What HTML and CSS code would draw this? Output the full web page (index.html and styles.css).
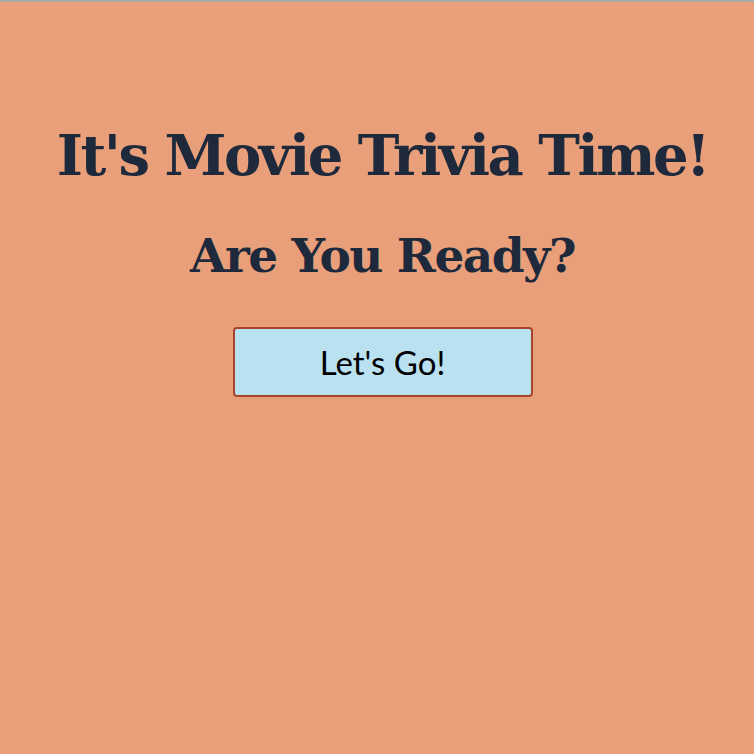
FILE: index.html
```html
<!DOCTYPE html>
<html>
<head>
<meta charset="utf-8">
<link rel="stylesheet" href="styles.css">
</head>
<body>
<main class="intro">
  <h1 class="title">It's Movie Trivia Time!</h1>
  <h2 class="subtitle">Are You Ready?</h2>
  <button class="start">Let's Go!</button>
</main>
</body>
</html>
```
FILE: styles.css
```css
html, body {
  margin: 0;
  padding: 0;
  height: 100%;
}
body {
  background: #e9a07a;
  border-top: 2px solid #a9a9a9;
  box-sizing: border-box;
}
.intro {
  display: flex;
  flex-direction: column;
  align-items: center;
  padding-top: 115px;
  padding-left: 11px;
}
.title {
  margin: 0;
  font-family: "DejaVu Serif", serif;
  font-weight: bold;
  font-size: 56px;
  line-height: 76px;
  color: #1e2a3c;
  letter-spacing: -2.5px;
}
.subtitle {
  margin: 35px 0 0;
  font-family: "DejaVu Serif", serif;
  font-weight: bold;
  font-size: 47px;
  line-height: 56px;
  color: #1e2a3c;
  letter-spacing: -1.5px;
}
.start {
  margin-top: 43px;
  width: 300px;
  height: 70px;
  background: #b9e1f0;
  border: 2px solid #a8442a;
  border-radius: 4px;
  font-family: Lato, sans-serif;
  font-size: 33px;
  color: #000;
  padding: 0;
}
```
